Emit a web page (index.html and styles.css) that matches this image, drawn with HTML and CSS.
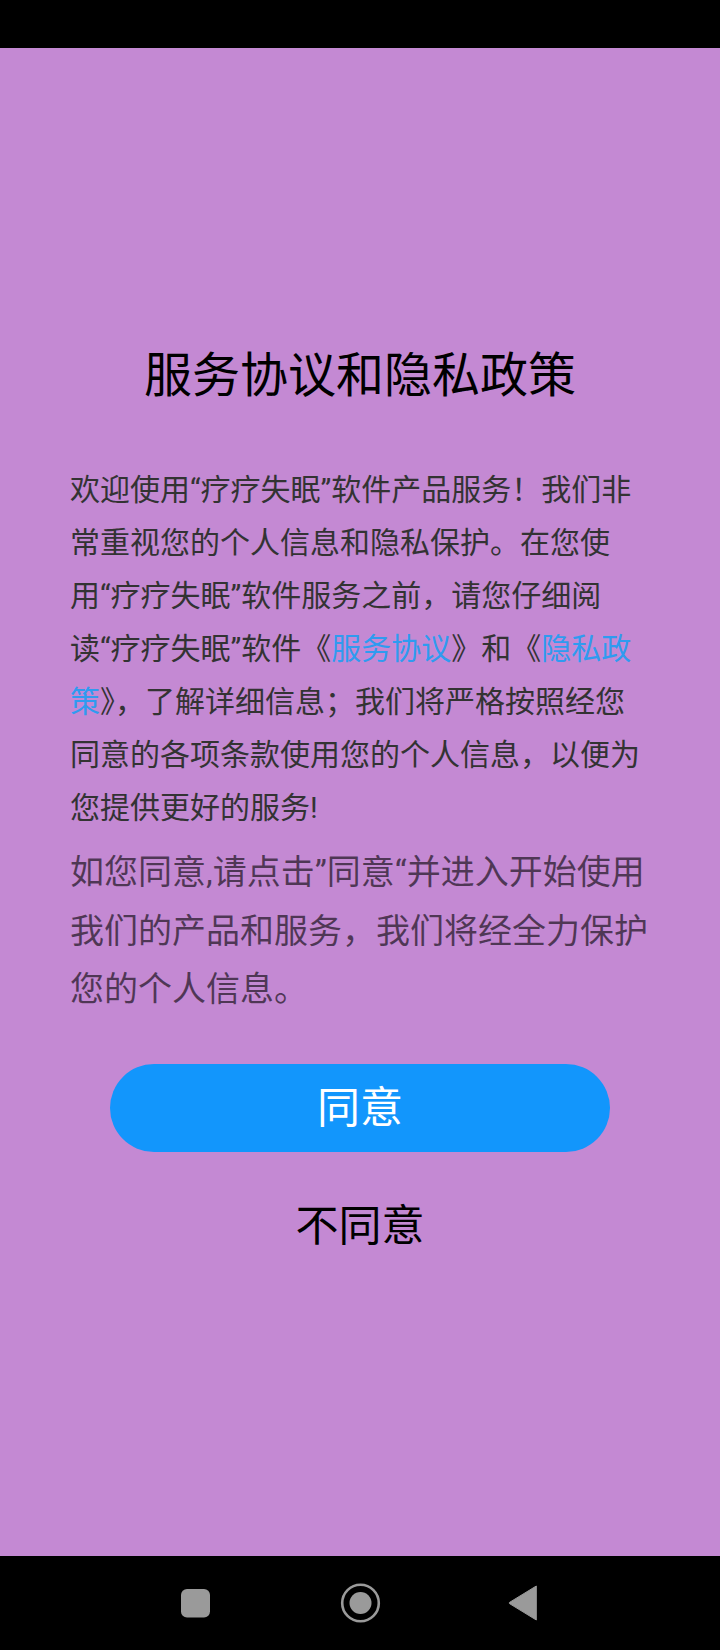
FILE: index.html
```html
<!DOCTYPE html>
<html lang="zh-CN">
<head>
<meta charset="utf-8">
<title>服务协议和隐私政策</title>
<link rel="stylesheet" href="styles.css">
</head>
<body>
<div class="screen">
  <div class="status-bar"></div>
  <main class="content">
    <h1 class="title">服务协议和隐私政策</h1>
    <div class="text-block">
      <p class="para para-main">欢迎使用&#8288;“疗疗失眠”软件产品服务！我们非常重视您的个人信息和隐私保护。在您使用&#8288;“疗疗失眠”软件服务之前，请您仔细阅读&#8288;“疗疗失眠”软件《<span class="link">服务协议</span>》和《<span class="link">隐私政策</span>》，了解详细信息；我们将严格按照经您同意的各项条款使用您的个人信息，以便为您提供更好的服务!</p>
      <p class="para para-sub">如您同意,请点击”同意“并进入开始使用我们的产品和服务，我们将经全力保护您的个人信息。</p>
    </div>
    <button class="btn-agree" type="button">同意</button>
    <button class="btn-disagree" type="button">不同意</button>
  </main>
  <nav class="nav-bar">
    <svg class="nav-icons" width="720" height="94" viewBox="0 0 720 94" xmlns="http://www.w3.org/2000/svg">
      <rect x="181" y="33" width="29" height="28.5" rx="6" ry="6" fill="#9a9a9a"/>
      <circle cx="360.5" cy="47" r="18.3" fill="none" stroke="#9a9a9a" stroke-width="2.6"/>
      <circle cx="360.5" cy="47" r="11" fill="#9a9a9a"/>
      <path d="M536.3 30 L536.3 64 L509.5 47.6 Q508.5 47 509.5 46.4 Z" fill="#9a9a9a" stroke="#9a9a9a" stroke-width="1" stroke-linejoin="round"/>
    </svg>
  </nav>
</div>
</body>
</html>
```

FILE: styles.css
```css
html, body {
  margin: 0;
  padding: 0;
}

body {
  width: 720px;
  height: 1650px;
  overflow: hidden;
  font-family: "Roboto", "Noto Sans CJK SC", sans-serif;
  background: #000;
}

.screen {
  display: flex;
  flex-direction: column;
  width: 720px;
  height: 1650px;
}

.status-bar {
  height: 48px;
  flex: 0 0 48px;
  background: #000;
}

.content {
  flex: 1 1 auto;
  background: #c489d3;
  display: flex;
  flex-direction: column;
  align-items: center;
  padding-top: 298px;
  box-sizing: border-box;
}

.title {
  margin: 0;
  font-size: 48px;
  line-height: 60px;
  font-weight: 400;
  color: #000;
}

.text-block {
  width: 580px;
  margin-top: 57px;
}

.para {
  margin: 0;
}

.para-main {
  font-size: 30px;
  line-height: 53px;
  color: #333;
}

.para-sub {
  margin-top: 9px;
  font-size: 34px;
  line-height: 58.5px;
  color: rgba(0, 0, 0, 0.6);
}

.link {
  color: #2f9bf0;
}

.btn-agree {
  margin-top: 45px;
  width: 500px;
  height: 88px;
  border: none;
  border-radius: 44px;
  background: #1296fc;
  color: #fff;
  font-family: inherit;
  font-size: 43px;
  line-height: 88px;
  padding: 0;
}

.btn-disagree {
  margin-top: 44px;
  border: none;
  background: transparent;
  color: #000;
  font-family: inherit;
  font-size: 43px;
  line-height: 60px;
  padding: 0 20px;
}

.nav-bar {
  height: 94px;
  flex: 0 0 94px;
  background: #000;
}

.nav-icons {
  display: block;
}
```
